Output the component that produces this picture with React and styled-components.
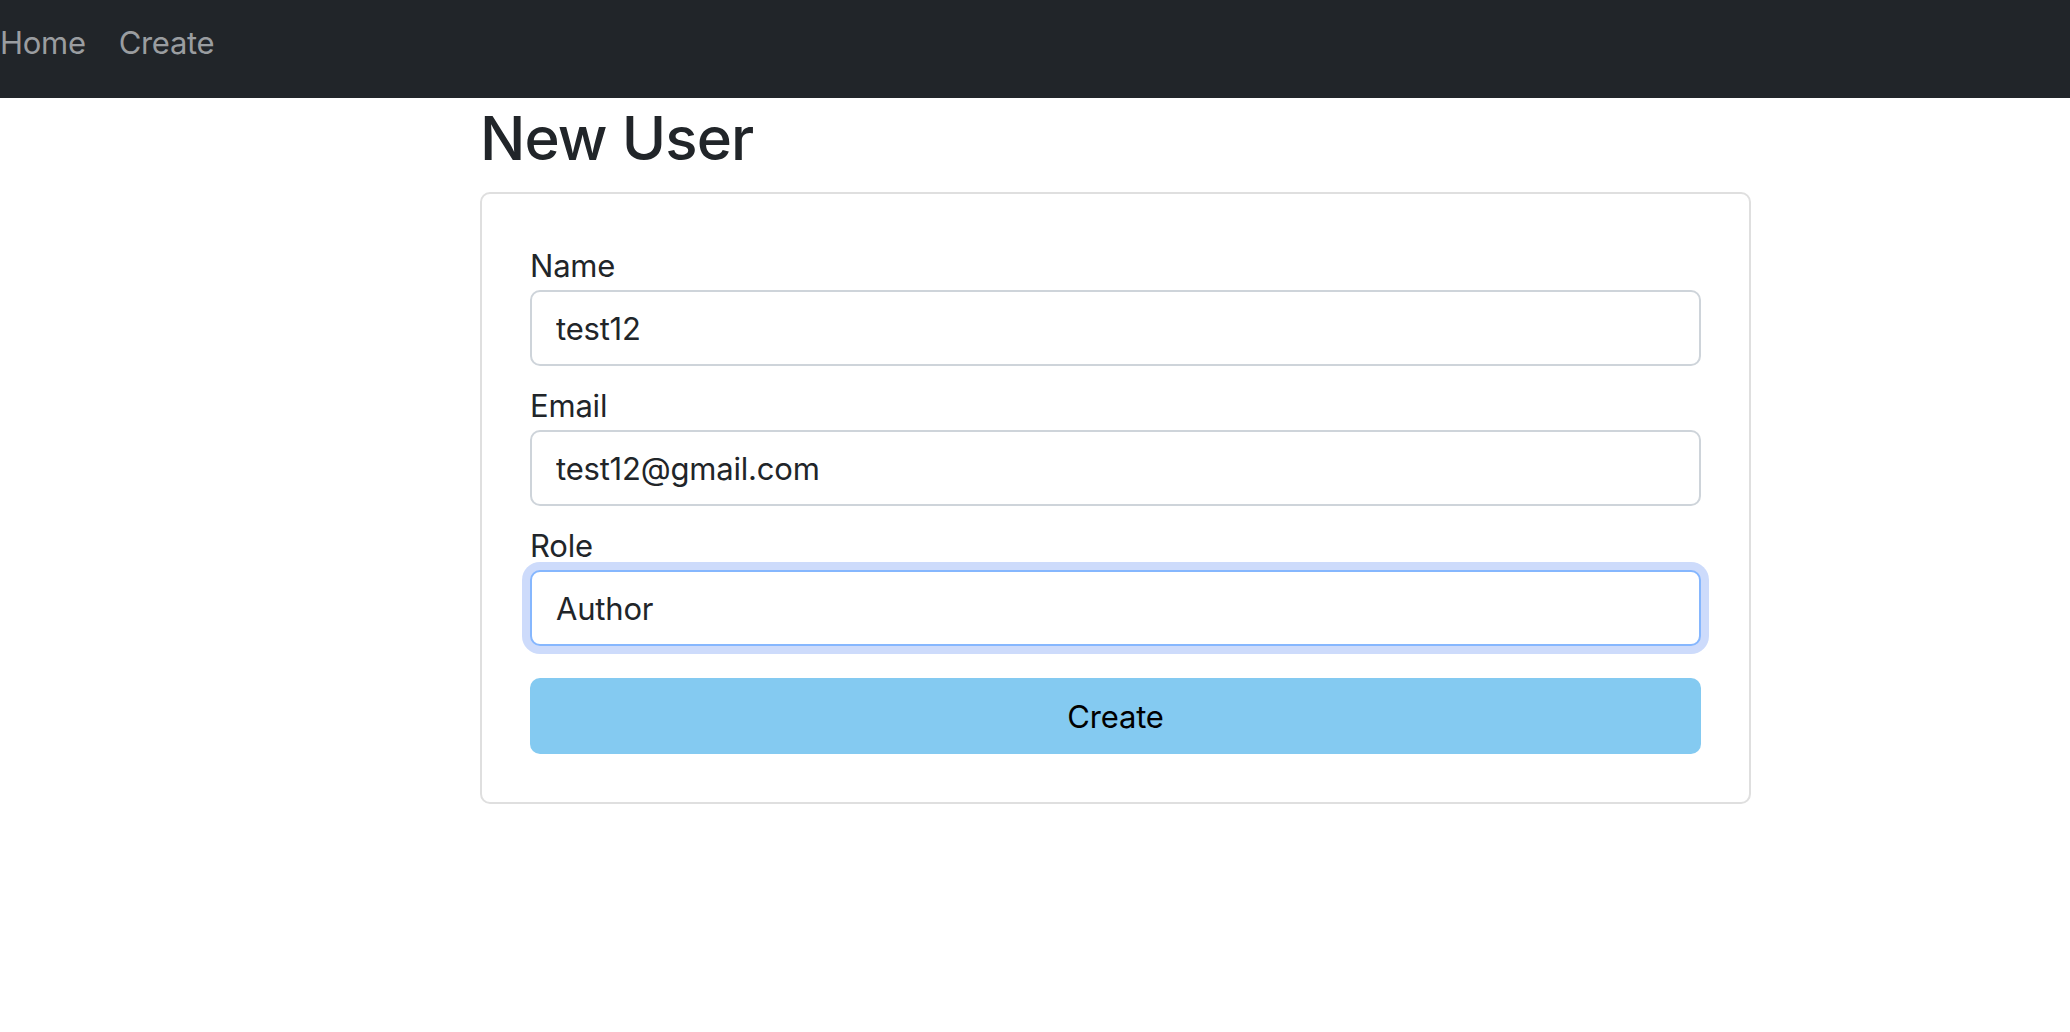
import React, { useState } from "react";
import styled, { createGlobalStyle } from "styled-components";

const GlobalStyle = createGlobalStyle`
  html, body {
    margin: 0;
    padding: 0;
    background: #fff;
    font-family: Inter, "Noto Sans", "Liberation Sans", sans-serif;
    color: #212529;
  }
  * {
    box-sizing: border-box;
  }
`;

const StyledNavBar = styled.nav`
  background-color: #212529;
  height: 98px;
  padding-top: 19px;
  display: flex;
  align-items: flex-start;
  gap: 33px;
  a {
    color: #9a9da0;
    text-decoration: none;
    font-size: 31px;
    line-height: 48px;
    letter-spacing: -0.3px;
  }
`;

const Main = styled.main`
  width: 1271px;
  margin-left: 480px;
`;

const Title = styled.h1`
  font-size: 60px;
  font-weight: 500;
  line-height: 72px;
  letter-spacing: -0.9px;
  margin: 4px 0 18px;
`;

const Card = styled.form`
  border: 2px solid #dfdfdf;
  border-radius: 10px;
  padding: 48px;
  display: flex;
  flex-direction: column;
`;

const Field = styled.div`
  display: flex;
  flex-direction: column;
  margin-bottom: 16px;
`;

const Label = styled.label`
  font-size: 31px;
  line-height: 48px;
  letter-spacing: -0.2px;
`;

const Input = styled.input`
  height: 76px;
  border: 2px solid ${(props) => (props.focused ? "#86b7fe" : "#ced4da")};
  border-radius: 10px;
  padding: 12px 24px;
  font-family: inherit;
  font-size: 31px;
  letter-spacing: -0.2px;
  color: #212529;
  outline: none;
  box-shadow: ${(props) => (props.focused ? "0 0 0 8px #cddbfb" : "none")};
`;

const SubmitButton = styled.button`
  margin-top: 16px;
  height: 76px;
  border: none;
  border-radius: 10px;
  background: #84caf1;
  color: #000;
  font-family: inherit;
  font-size: 31px;
  letter-spacing: -0.2px;
  cursor: pointer;
`;

const fields = [
  { id: "name", label: "Name", value: "test12" },
  { id: "email", label: "Email", value: "test12@gmail.com" },
  { id: "role", label: "Role", value: "Author", focused: true },
];

export default function App() {
  //state
  const [values, setValues] = useState(
    Object.fromEntries(fields.map((f) => [f.id, f.value]))
  );

  return (
    <>
      <GlobalStyle />
      <StyledNavBar>
        <a href="#">Home</a>
        <a href="#">Create</a>
      </StyledNavBar>
      <Main>
        <Title>New User</Title>
        <Card onSubmit={(e) => e.preventDefault()}>
          {fields.map((f) => (
            <Field key={f.id}>
              <Label htmlFor={f.id}>{f.label}</Label>
              <Input
                id={f.id}
                focused={f.focused}
                value={values[f.id]}
                onChange={(e) => setValues({ ...values, [f.id]: e.target.value })}
              />
            </Field>
          ))}
          <SubmitButton type="submit">Create</SubmitButton>
        </Card>
      </Main>
    </>
  );
}
